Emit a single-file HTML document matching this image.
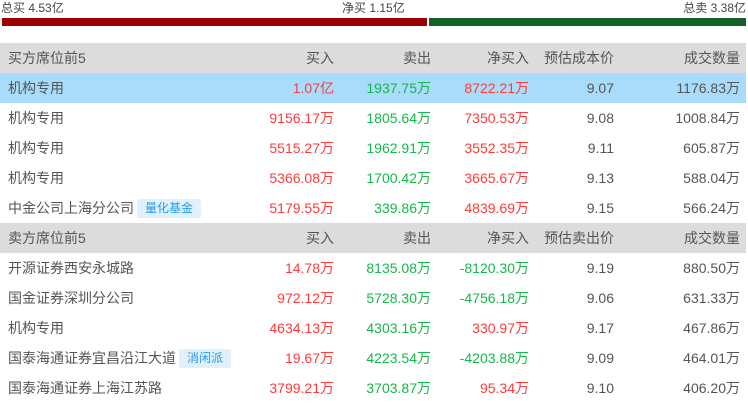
<!DOCTYPE html><html><head><meta charset="utf-8"><style>
body{margin:0;width:748px;height:401px;overflow:hidden;background:#fff;font-family:"Liberation Sans","Noto Sans CJK SC",sans-serif;color:#555;}
.top{position:absolute;top:0;font-size:12px;line-height:16px;color:#444}
.bar{position:absolute;top:18px;height:8px}
table{position:absolute;top:43px;left:0;width:746px;border-collapse:collapse;font-size:14px;table-layout:fixed}
td{height:30px;padding:0;white-space:nowrap;overflow:visible}
td.n{text-align:right}
tr.h td{background:#dcdcdc;color:#555}
tr.s td{background:#a8dcfa}
.r{color:#ff3b3b}.g{color:#15b84a}
.tag{display:inline-block;background:#e0f1fc;color:#2a9be6;font-size:12px;line-height:19px;padding:0 8px;margin-left:3px;border-radius:2px;vertical-align:middle}
</style></head><body>
<div class="top" style="left:1px">总买 4.53亿</div>
<div class="top" style="left:342px">净买 1.15亿</div>
<div class="top" style="right:2px">总卖 3.38亿</div>
<div class="bar" style="left:2px;width:425px;background:#9b0000"></div>
<div class="bar" style="left:429px;width:317px;background:#13602a"></div>
<table>
<colgroup><col style="width:8px"><col style="width:192px"><col style="width:134px"><col style="width:97px"><col style="width:98px"><col style="width:85px"><col style="width:126px"><col style="width:6px"></colgroup>
<tr class="h"><td></td><td>买方席位前5</td><td class="n">买入</td><td class="n">卖出</td><td class="n">净买入</td><td class="n">预估成本价</td><td class="n">成交数量</td><td></td></tr>
<tr class="s"><td></td><td>机构专用</td><td class="n r">1.07亿</td><td class="n g">1937.75万</td><td class="n r">8722.21万</td><td class="n">9.07</td><td class="n">1176.83万</td><td></td></tr>
<tr><td></td><td>机构专用</td><td class="n r">9156.17万</td><td class="n g">1805.64万</td><td class="n r">7350.53万</td><td class="n">9.08</td><td class="n">1008.84万</td><td></td></tr>
<tr><td></td><td>机构专用</td><td class="n r">5515.27万</td><td class="n g">1962.91万</td><td class="n r">3552.35万</td><td class="n">9.11</td><td class="n">605.87万</td><td></td></tr>
<tr><td></td><td>机构专用</td><td class="n r">5366.08万</td><td class="n g">1700.42万</td><td class="n r">3665.67万</td><td class="n">9.13</td><td class="n">588.04万</td><td></td></tr>
<tr><td></td><td>中金公司上海分公司<span class="tag">量化基金</span></td><td class="n r">5179.55万</td><td class="n g">339.86万</td><td class="n r">4839.69万</td><td class="n">9.15</td><td class="n">566.24万</td><td></td></tr>
<tr class="h"><td></td><td>卖方席位前5</td><td class="n">买入</td><td class="n">卖出</td><td class="n">净买入</td><td class="n">预估卖出价</td><td class="n">成交数量</td><td></td></tr>
<tr><td></td><td>开源证券西安永城路</td><td class="n r">14.78万</td><td class="n g">8135.08万</td><td class="n g">-8120.30万</td><td class="n">9.19</td><td class="n">880.50万</td><td></td></tr>
<tr><td></td><td>国金证券深圳分公司</td><td class="n r">972.12万</td><td class="n g">5728.30万</td><td class="n g">-4756.18万</td><td class="n">9.06</td><td class="n">631.33万</td><td></td></tr>
<tr><td></td><td>机构专用</td><td class="n r">4634.13万</td><td class="n g">4303.16万</td><td class="n r">330.97万</td><td class="n">9.17</td><td class="n">467.86万</td><td></td></tr>
<tr><td></td><td>国泰海通证券宜昌沿江大道<span class="tag">消闲派</span></td><td class="n r">19.67万</td><td class="n g">4223.54万</td><td class="n g">-4203.88万</td><td class="n">9.09</td><td class="n">464.01万</td><td></td></tr>
<tr><td></td><td>国泰海通证券上海江苏路</td><td class="n r">3799.21万</td><td class="n g">3703.87万</td><td class="n r">95.34万</td><td class="n">9.10</td><td class="n">406.20万</td><td></td></tr>
</table>
</body></html>
